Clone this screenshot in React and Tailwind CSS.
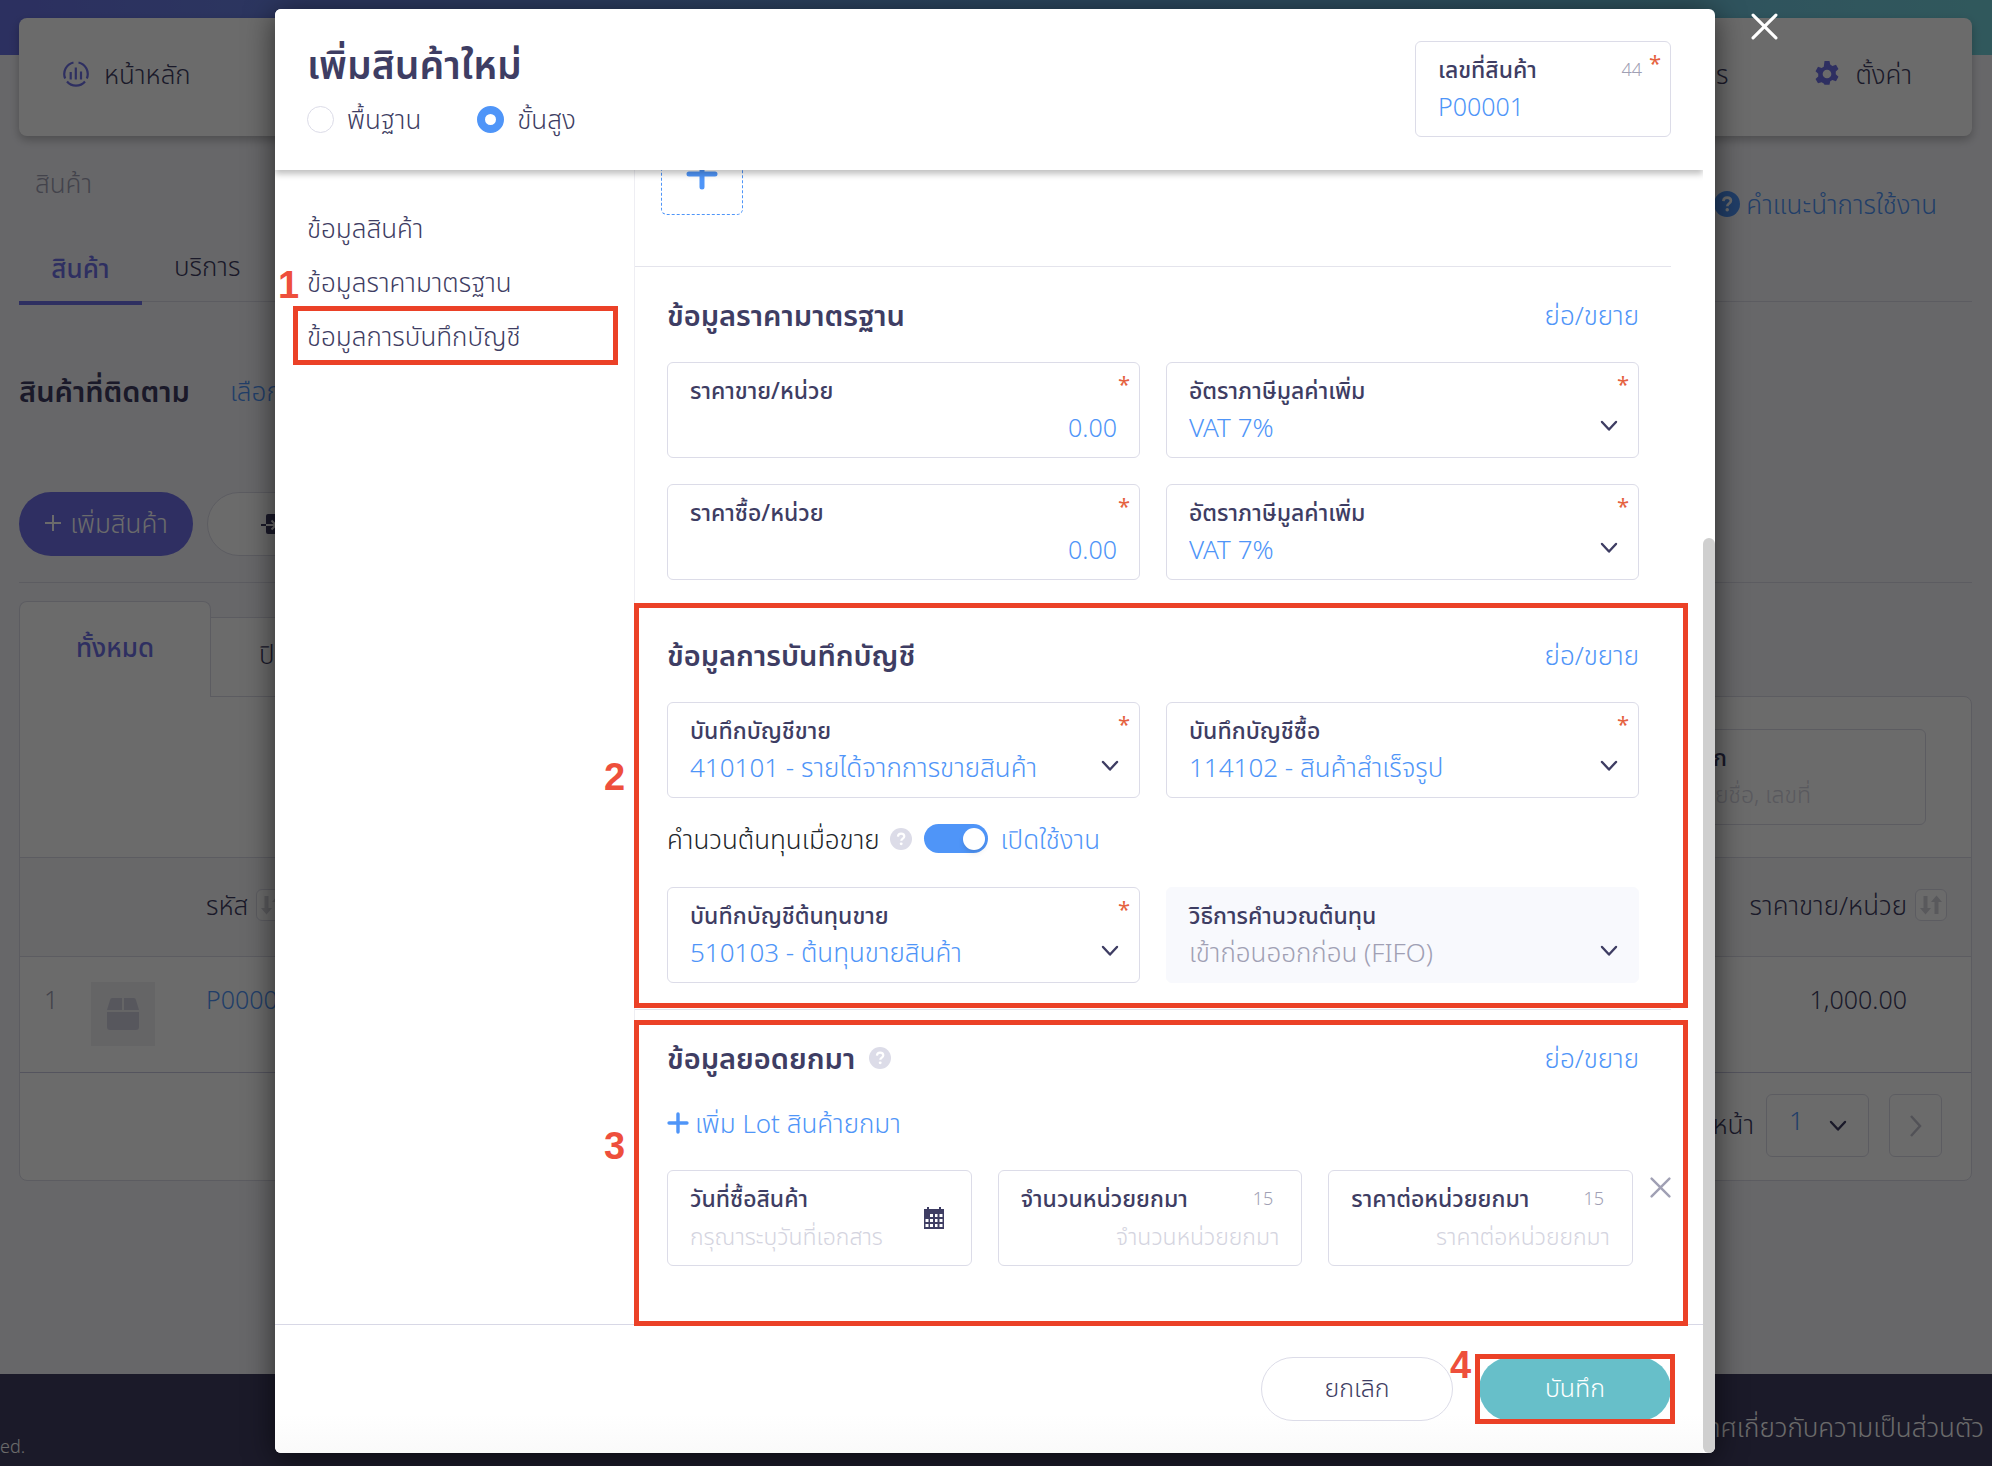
import { useState } from "react";

const SANS = "font-['Noto_Sans','Noto_Sans_Thai',sans-serif]";

function ChevronDown({ className }) {
  return (
    <svg viewBox="0 0 18 12" fill="none" stroke="currentColor" strokeWidth="2.400" strokeLinecap="round" strokeLinejoin="round" className={`h-3 w-[18px] ${className || ""}`}>
      <path d="M2 2l7 7.500L16 2" />
    </svg>
  );
}

function Cross({ className }) {
  return (
    <svg viewBox="0 0 26 26" fill="none" stroke="currentColor" strokeWidth="3" strokeLinecap="round" className={className}>
      <path d="M2 2l22 22M24 2L2 24" />
    </svg>
  );
}

function Plus({ className }) {
  return (
    <svg viewBox="0 0 32 32" fill="none" stroke="currentColor" strokeWidth="5" strokeLinecap="round" className={className}>
      <path d="M16 3v26M3 16h26" />
    </svg>
  );
}

function Help({ className }) {
  return (
    <svg viewBox="0 0 24 24" className={className}>
      <circle cx="12" cy="12" r="12" fill="currentColor" />
      <path d="M8.600 9.300c.2-2 1.600-3.200 3.500-3.200 2 0 3.500 1.200 3.500 3 0 2.500-3.300 2.400-3.300 4.900" fill="none" stroke="#fff" strokeWidth="2.400" />
      <circle cx="12.200" cy="17.300" r="1.600" fill="#fff" />
    </svg>
  );
}

function SortIcon() {
  return (
    <button className="flex h-8 w-8 shrink-0 items-center justify-center rounded-md border border-[#dcdce8] bg-white text-[#d3d3dc]" aria-label="เรียงลำดับ">
      <svg viewBox="0 0 24 24" className="h-6 w-6" fill="currentColor">
        <path d="M4.500 3h4v12H12l-5.500 6.500L1 15h3.500zM15.500 21h4V9H23l-5.500-6.500L12 9h3.500z" />
      </svg>
    </button>
  );
}

function Field({ id, label, required, count, disabled, children }) {
  return (
    <div className={`relative h-24 rounded-md border px-[22px] pt-[13px] ${disabled ? "border-[#f8f9fd] bg-[#f8f9fd]" : "border-[#dcdce8] bg-white"}`}>
      <div className="flex items-center justify-between">
        <label htmlFor={id} className="text-[23px] leading-7 font-medium whitespace-nowrap text-[#3e3d63]">
          {label}
        </label>
        {count && <span className="mr-1.5 text-lg leading-7 text-[#a0a0b4]">{count}</span>}
      </div>
      {children}
      {required && <span className="absolute top-2 right-[9px] text-[22px] leading-6 font-normal text-[#e5623f]">*</span>}
    </div>
  );
}

function TextField({ id, label, value, placeholder, required, count, right }) {
  return (
    <Field id={id} label={label} required={required} count={count}>
      <input
        id={id}
        defaultValue={value}
        placeholder={placeholder}
        className={`mt-[3px] block h-10 w-full bg-transparent text-[25px] text-[#4f95f8] outline-none placeholder:text-[23px] placeholder:text-[#d4d4e0] ${right ? "text-right" : ""}`}
      />
    </Field>
  );
}

function SelectField({ id, label, value, required, disabled }) {
  return (
    <Field id={id} label={label} required={required} disabled={disabled}>
      <select
        id={id}
        disabled={disabled}
        className={`mt-[3px] block h-10 w-full appearance-none bg-transparent opacity-100 outline-none ${disabled ? "text-[#a0a0b4]" : "text-[#4f95f8]"}`}
      >
        <option>{value}</option>
      </select>
      <ChevronDown className="pointer-events-none absolute top-[57px] right-5 text-[#3e3d63]" />
    </Field>
  );
}

function Section({ title, help, children, className }) {
  return (
    <section className={`relative mr-8 border-t border-[#e4e4ec] px-8 pt-[27px] ${className || ""}`}>
      <div className="mb-[26px] flex h-[42px] items-center justify-between">
        <h2 className="flex items-center gap-3.5 text-[29px] leading-[42px] font-semibold text-[#3e3d63]">
          {title}
          {help && <Help className="h-[22px] w-[22px] text-[#dcdce8]" />}
        </h2>
        <a href="#" className="text-[#4f95f8]">ย่อ/ขยาย</a>
      </div>
      {children}
    </section>
  );
}

function Mark({ className, children }) {
  return (
    <span className={`pointer-events-none absolute z-20 font-['Liberation_Sans',Arial,sans-serif] text-[38px] leading-10 font-bold text-[#ee4f3c] ${className}`}>
      {children}
    </span>
  );
}

function Highlight({ className }) {
  return <div className={`pointer-events-none absolute z-20 border-[5px] border-[#eb4127] ${className}`} />;
}

function ProductPage() {
  return (
    <div className="isolate flex min-h-screen flex-col bg-[#f6f6fb] text-[#3e3d63]">
      <div className="h-[55px] bg-linear-to-r from-[#6a72e4] via-[#68a5e0] to-[#74d2dc]" />
      <nav className="mr-5 ml-[19px] -mt-[37px] flex h-[118px] items-center justify-between rounded-lg bg-white px-11 pb-1.5 shadow-[0_4px_10px_rgba(0,0,0,0.25)]">
        <a href="#" className="flex items-center gap-[15px]">
          <svg viewBox="0 0 26 26" className="h-[26px] w-[26px] text-[#6f70e6]" fill="none" stroke="currentColor" strokeWidth="2.200">
            <path d="M10.500 1.500A11.700 11.700 0 0 0 2.200 17.500M15.500 1.500A11.700 11.700 0 0 1 23.800 17.500M4 20.500a11.700 11.700 0 0 0 18 0M7.700 11v7.500M12.800 6.500v12M18 10.500v8" />
          </svg>
          หน้าหลัก
        </a>
        <div className="flex items-center gap-[86px] pr-4">
          <a href="#">เอกสาร</a>
          <a href="#" className="flex items-center gap-[15px]">
            <svg viewBox="0 0 24 24" className="h-[26px] w-[26px] text-[#6f70e6]" fill="currentColor" fillRule="evenodd">
              <path d="M9.700 0h4.600l.7 3.300 2 1.200 3.300-1.100 2.300 4-2.500 2.400v2.400l2.500 2.400-2.300 4-3.300-1.100-2 1.200-.7 3.300H9.700L9 20.700l-2-1.200-3.300 1.100-2.300-4 2.500-2.400v-2.400L1.400 9.400l2.300-4L7 6.500l2-1.200zM12 8a4 4 0 1 0 0 8 4 4 0 0 0 0-8z" />
            </svg>
            ตั้งค่า
          </a>
        </div>
      </nav>
      <div className="flex h-[104px] justify-between pt-[23px] pr-[55px] pl-[35px]">
        <span className="leading-[48px] text-[#a0a0b4]">สินค้า</span>
        <a href="#" className="flex items-center gap-1.5 self-start pt-[21px] leading-[48px] text-[#4f95f8]">
          <Help className="h-[26px] w-[26px]" />
          คำแนะนำการใช้งาน
        </a>
      </div>
      <div className="mr-5 ml-[19px] flex h-[62px] border-b border-[#dcdce8]">
        <a href="#" className="-mb-1 flex w-[123px] justify-center border-b-4 border-[#6f70e6] pt-2.5 font-medium text-[#6f70e6]">สินค้า</a>
        <a href="#" className="px-8 pt-2">บริการ</a>
      </div>
      <div className="mr-5 ml-[19px] mt-[66px] flex h-12 items-center gap-10 pb-0.5">
        <h1 className="text-[29px] font-semibold">สินค้าที่ติดตาม</h1>
        <a href="#" className="text-[#4f95f8]">เลือกสินค้า</a>
      </div>
      <div className="mr-5 ml-[19px] mt-[76px] flex h-[91px] gap-[14px] border-b border-[#dcdce8]">
        <button className="flex h-16 w-[174px] items-center justify-center gap-2 rounded-full bg-[#7070e9] pb-0.5 text-white">
          <svg viewBox="0 0 18 18" className="h-[18px] w-[18px]" stroke="currentColor" strokeWidth="2">
            <path d="M9 1v16M1 9h16" />
          </svg>
          เพิ่มสินค้า
        </button>
        <button className="flex h-16 w-60 items-center gap-2 rounded-full border border-[#dcdce8] bg-white pl-[53px]">
          <svg viewBox="0 0 24 22" className="h-[22px] w-6">
            <rect x="5" y="1" width="18" height="20" rx="2" fill="#3e3d63" />
            <path d="M0 12h5" stroke="#3e3d63" strokeWidth="2" />
            <path d="M5 12h9M10.500 7.500L15 12l-4.500 4.500" fill="none" stroke="#fff" strokeWidth="2" />
          </svg>
          นำเข้า
        </button>
      </div>
      <div className="mr-5 ml-[19px] mt-[18px] flex items-end">
        <button className="relative z-10 -mb-px h-24 w-48 rounded-t-lg border border-b-0 border-[#dcdce8] bg-white pb-1.5 font-medium text-[#6f70e6]">ทั้งหมด</button>
        <button className="h-[79px] w-52 border-t border-[#dcdce8] bg-white pb-1.5 pl-12 text-left">ปิดใช้งาน</button>
      </div>
      <div className="mr-5 ml-[19px] rounded-b-lg rounded-tr-lg border border-[#dcdce8] bg-white">
        <div className="flex h-40 justify-end pt-8 pr-[45px]">
          <div className="h-24 w-[340px] rounded-md border border-[#dcdce8] pt-[13px] pr-[22px] pl-[52px]">
            <label htmlFor="search" className="block text-[23px] leading-7 font-medium">ค้นหาจาก</label>
            <input id="search" placeholder="ค้นหาด้วยชื่อ, เลขที่" className="mt-0.5 h-10 w-full bg-transparent placeholder:text-[23px] placeholder:text-[#d4d4e0]" />
          </div>
        </div>
        <table className="w-full">
          <thead>
            <tr className="h-[99px] border-y border-[#dcdce8] bg-[#f8f8fa]">
              <th className="w-[71px]" />
              <th className="w-[115px]" />
              <th className="pb-1 text-left font-[350]">
                <span className="flex items-center gap-2">รหัส <SortIcon /></span>
              </th>
              <th className="pr-6 pb-1 font-[350]">
                <span className="flex items-center justify-end gap-2">ราคาขาย/หน่วย <SortIcon /></span>
              </th>
            </tr>
          </thead>
          <tbody>
            <tr className="h-[116px] border-b border-[#c8c8e0] align-top">
              <td className="pt-6 pl-6 text-[25px] text-[#a0a0b4]">1</td>
              <td className="pt-[25px]">
                <div className="flex h-16 w-16 items-center justify-center bg-[#f0f0f3] text-[#d0d0de]">
                  <svg viewBox="0 0 32 32" className="h-8 w-8" fill="currentColor">
                    <path d="M5 0h10v12H0L3 2q.5-2 2-2zM17 0h10q1.500 0 2 2l3 10H17zM0 14h32v15q0 3-3 3H3q-3 0-3-3z" />
                  </svg>
                </div>
              </td>
              <td className="pt-6 text-[25px]"><a href="#" className="text-[#4f95f8]">P00001</a></td>
              <td className="pt-6 pr-16 text-right text-[25px]">1,000.00</td>
            </tr>
          </tbody>
        </table>
        <div className="flex h-[107px] items-start justify-end pt-[21px] pr-[29px]">
          <label htmlFor="page" className="mr-3 leading-[60px]">หน้า</label>
          <div className="relative mr-5">
            <select id="page" className="h-[63px] w-[103px] appearance-none rounded-md border border-[#dcdce8] pb-3 pl-[22px] text-[#4f95f8]">
              <option>1</option>
            </select>
            <ChevronDown className="absolute top-[26px] right-[22px]" />
          </div>
          <button className="flex h-[63px] w-[53px] items-center justify-center rounded-md border border-[#dcdce8] text-[#c4c4d0]" aria-label="ถัดไป">
            <svg viewBox="0 0 12 22" className="h-[22px] w-3" fill="none" stroke="currentColor" strokeWidth="2.500">
              <path d="M1 1l9 10-9 10" />
            </svg>
          </button>
        </div>
      </div>
      <footer className="mt-auto flex h-[92px] justify-between bg-[#403e62] pr-2 text-white">
        <span className="self-end pb-1 text-lg leading-8">ed.</span>
        <a href="#" className="pt-[33px] leading-10">ประกาศเกี่ยวกับความเป็นส่วนตัว</a>
      </footer>
    </div>
  );
}

function Radio({ label, checked, onChange }) {
  return (
    <label className="flex h-9 items-center gap-[13px] text-[#3e3d63]">
      <input
        type="radio"
        name="mode"
        checked={checked}
        onChange={onChange}
        className="h-[27px] w-[27px] appearance-none rounded-full border border-[#dcdce8] bg-white checked:border-8 checked:border-[#4f95f8]"
      />
      {label}
    </label>
  );
}

function ProductModal() {
  const [mode, setMode] = useState("advanced");
  return (
    <div className="relative w-full max-w-[1440px] rounded-md bg-white shadow-[0_5px_30px_rgba(0,0,0,0.6)]">
      <button className="absolute top-1 -right-[63px] text-white" aria-label="ปิด">
        <Cross className="h-[27px] w-[27px]" />
      </button>
      <header className="relative z-10 mr-3 flex h-[161px] justify-between rounded-tl-md bg-white pt-8 pr-8 pl-8 shadow-[0_4px_6px_rgba(0,0,0,0.25)] [clip-path:inset(0_0_-12px_0)]">
        <div>
          <h1 className="text-[39px] leading-[46px] font-semibold text-[#3e3d63]">เพิ่มสินค้าใหม่</h1>
          <div className="mt-3.5 flex gap-14">
            <Radio label="พื้นฐาน" checked={mode === "basic"} onChange={() => setMode("basic")} />
            <Radio label="ขั้นสูง" checked={mode === "advanced"} onChange={() => setMode("advanced")} />
          </div>
        </div>
        <div className="w-64">
          <TextField id="sku" label="เลขที่สินค้า" value="P00001" count="44" required />
        </div>
      </header>

      <div className="mr-3 flex">
        <aside className="relative w-[359px] shrink-0 pt-[31px]">
          <a href="#info" className="block pl-8 leading-[54px] text-[#3e3d63]">ข้อมูลสินค้า</a>
          <a href="#price" className="block pl-8 leading-[54px] text-[#3e3d63]">ข้อมูลราคามาตรฐาน</a>
          <a href="#account" className="relative block pl-8 leading-[54px] text-[#3e3d63]">
            ข้อมูลการบันทึกบัญชี
            <Highlight className="-top-[3px] right-4 left-[18px] h-[59px]" />
            <Mark className="-top-11 left-[3px]">1</Mark>
          </a>
        </aside>

        <div className="min-w-0 flex-1 border-l border-[#eeeef3]">
          <div className="-mt-[37px] pb-[51px] pl-[26px]">
            <button className="flex h-[82px] w-[82px] items-center justify-center rounded-md border border-dashed border-[#4f95f8] text-[#4f95f8]" aria-label="เพิ่มรูป">
              <Plus className="h-8 w-8" />
            </button>
          </div>

          <Section title="ข้อมูลราคามาตรฐาน" className="pb-[26px]">
            <div className="grid grid-cols-2 gap-[26px]">
              <TextField id="sell" label="ราคาขาย/หน่วย" value="0.00" required right />
              <SelectField id="sell-vat" label="อัตราภาษีมูลค่าเพิ่ม" value="VAT 7%" required />
              <TextField id="buy" label="ราคาซื้อ/หน่วย" value="0.00" required right />
              <SelectField id="buy-vat" label="อัตราภาษีมูลค่าเพิ่ม" value="VAT 7%" required />
            </div>
          </Section>

          <Section title="ข้อมูลการบันทึกบัญชี" className="pb-[26px]">
            <Highlight className="-top-1 -right-[17px] bottom-px -left-px" />
            <Mark className="top-[150px] -left-[31px]">2</Mark>
            <div className="grid grid-cols-2 gap-x-[26px]">
              <SelectField id="acc-sell" label="บันทึกบัญชีขาย" value="410101 - รายได้จากการขายสินค้า" required />
              <SelectField id="acc-buy" label="บันทึกบัญชีซื้อ" value="114102 - สินค้าสำเร็จรูป" required />
              <div className="col-span-2 mt-[18px] mb-[26px] flex h-[45px] items-center">
                <label htmlFor="cost" className="text-[#212529]">คำนวนต้นทุนเมื่อขาย</label>
                <Help className="mr-3 ml-[10px] h-[22px] w-[22px] text-[#dcdce8]" />
                <input
                  id="cost"
                  type="checkbox"
                  role="switch"
                  defaultChecked
                  className="relative h-[29px] w-16 appearance-none rounded-full bg-[#dcdce8] before:absolute before:top-1 before:left-1 before:h-[22px] before:w-[22px] before:rounded-full before:bg-white before:shadow-md checked:bg-[#4f95f8] checked:before:left-[39px]"
                />
                <span className="ml-[13px] text-[#4f95f8]">เปิดใช้งาน</span>
              </div>
              <SelectField id="acc-cost" label="บันทึกบัญชีต้นทุนขาย" value="510103 - ต้นทุนขายสินค้า" required />
              <SelectField id="method" label="วิธีการคำนวณต้นทุน" value="เข้าก่อนออกก่อน (FIFO)" disabled />
            </div>
          </Section>

          <Section title="ข้อมูลยอดยกมา" help className="pb-[58px]">
            <Highlight className="top-[10px] -right-[17px] -bottom-0.5 -left-px" />
            <Mark className="top-[116px] -left-[31px]">3</Mark>
            <button className="mb-[29px] flex h-9 items-center gap-1.5 text-[#4f95f8]">
              <Plus className="h-[22px] w-[22px]" />
              เพิ่ม Lot สินค้ายกมา
            </button>
            <div className="relative grid grid-cols-3 gap-[26px] pr-[6px]">
              <div className="relative">
                <TextField id="date" label="วันที่ซื้อสินค้า" placeholder="กรุณาระบุวันที่เอกสาร" />
                <svg viewBox="0 0 20 22" className="absolute top-[37px] right-[28px] h-[22px] w-5">
                  <path d="M0 2h20v20H0z" fill="#3e3d63" />
                  <path d="M3 0h2v3H3zM15 0h2v3h-2z" fill="#3e3d63" />
                  <path d="M6 7h3v3H6zM11 7h2.500v3H11zM15.500 7h3v3h-3zM1.500 12h3v3h-3zM6 12h3v3H6zM11 12h2.500v3H11zM15.500 12h3v3h-3zM1.500 17h3v3h-3zM6 17h3v3H6zM11 17h2.500v3H11zM15.500 17h3v3h-3z" fill="#fff" />
                </svg>
              </div>
              <TextField id="qty" label="จำนวนหน่วยยกมา" placeholder="จำนวนหน่วยยกมา" count="15" right />
              <TextField id="unit" label="ราคาต่อหน่วยยกมา" placeholder="ราคาต่อหน่วยยกมา" count="15" right />
              <button className="absolute top-[7px] -right-8 text-[#a0a0b4]" aria-label="ลบ">
                <Cross className="h-[21px] w-[21px]" />
              </button>
            </div>
          </Section>
        </div>
      </div>

      <footer className="mr-3 flex h-[129px] justify-end gap-[26px] rounded-bl-md border-t border-[#d8d8e6] bg-linear-to-b from-white from-70% to-[#fafafa] pt-8 pr-8">
        <button className="h-16 w-48 rounded-full border border-[#dcdce8] bg-white pb-1 text-[25px] text-[#3e3d63]">ยกเลิก</button>
        <div className="relative">
          <button className="h-16 w-48 rounded-full bg-[#67bfc9] pb-1 text-[25px] text-white">บันทึก</button>
          <Highlight className="-inset-x-1 -top-[3px] h-[70px]" />
          <Mark className="-top-3 -left-[29px]">4</Mark>
        </div>
      </footer>
      <div className="absolute top-[529px] right-0 bottom-0 w-3 rounded-full bg-[#cfcfcf]" />
    </div>
  );
}

export default function App() {
  return (
    <div className={`relative min-h-screen overflow-hidden text-[26px] leading-9 font-[350] ${SANS}`}>
      <ProductPage />
      <div className="absolute inset-0 flex items-start justify-center bg-black/58 pt-[9px] pr-0.5">
        <ProductModal />
      </div>
    </div>
  );
}
